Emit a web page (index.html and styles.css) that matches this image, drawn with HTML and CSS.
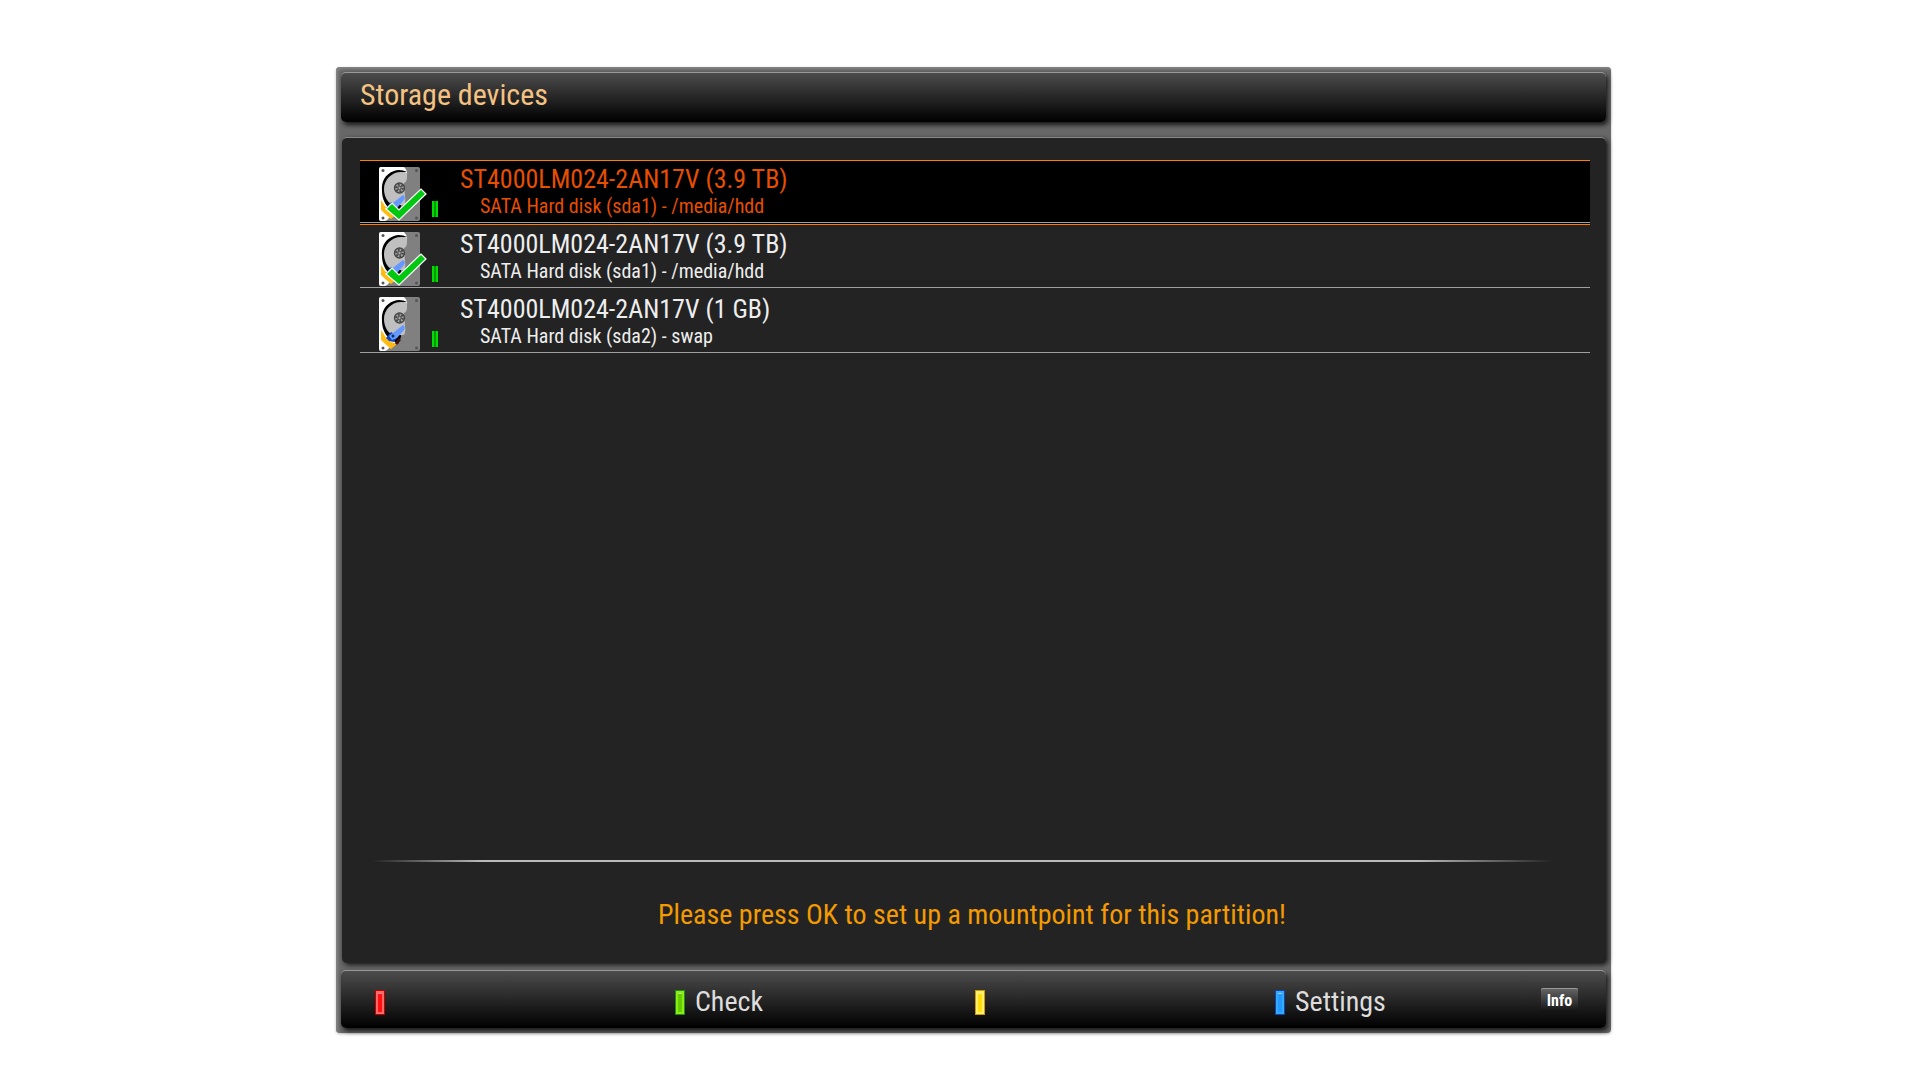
FILE: index.html
```html
<!DOCTYPE html>
<html lang="en">
<head>
<meta charset="utf-8">
<title>Storage devices</title>
<link rel="stylesheet" href="styles.css">
</head>
<body>
<svg class="defs" width="0" height="0" aria-hidden="true">
  <symbol id="disk" viewBox="0 0 50 56">
    <rect x="0" y="0" width="41" height="54" rx="2" fill="#808080"/>
    <path d="M2 0H25Q29 4 28 8L20 42L8 53L6 54H2Q0 54 0 52V2Q0 0 2 0Z" fill="#fff"/>
    <path d="M16 42L25 38L24 45L8 54H38V20L28 6Z" fill="#808080"/>
    <path d="M28 5C24 3 19 2 15 4C6 7 2 15 3 24C3 30 5 36 9 40L19 47L22 40L20 6Z" fill="#000"/>
    <path d="M28 6C16 2 5 11 5 22C5 30 9 36 14 38L25 38Q27 35 26 29L25 16Q28 15 28 10Z" fill="#c0c0c0"/>
    <path d="M2 33L8 42L12 45L18 47L12 52Q6 47 2 43Z" fill="#fb1"/>
    <path d="M16 46L20 41L22 43L18 48Z" fill="#411"/>
    <path d="M7 41L12 35L19 39L15 45L10 44Z" fill="#14b"/>
    <path d="M10 39L24 28Q27 30 25 33L18 41L13 43Z" fill="#69f"/>
    <circle cx="14" cy="39" r="1.5" fill="#036"/>
    <circle cx="20.500" cy="21" r="5" fill="#a0a0a0" stroke="#444" stroke-width="1.3"/>
    <circle cx="20.500" cy="21" r="3.3" fill="none" stroke="#444" stroke-width="2" stroke-dasharray="1.7 1.7"/>
    <circle cx="20.500" cy="21" r="1.7" fill="#aaa" stroke="#444"/>
    <g fill="#555"><circle cx="4" cy="3.500" r="1.500"/><circle cx="37.500" cy="3.500" r="1.500"/><circle cx="4" cy="51" r="1.500"/><circle cx="37.500" cy="51" r="1.500"/></g>
  </symbol>
  <symbol id="tick" viewBox="0 0 50 56">
    <path d="M7 42L13 36L20 43L42 22L47 27L20 53Z" fill="#00c810" stroke="#fff" stroke-width="1.2"/>
  </symbol>
</svg>
<main class="window">
  <header class="bar title-bar"><h1>Storage devices</h1></header>
  <section class="panel">
    <ul class="devices">
      <li class="device selected">
        <svg class="disk" viewBox="0 0 50 56"><use href="#disk"/><use href="#tick"/></svg>
        <span class="plug"></span>
        <div class="info"><p class="name">ST4000LM024-2AN17V (3.9 TB)</p><p class="detail">SATA Hard disk (sda1) - /media/hdd</p></div>
      </li>
      <li class="device">
        <svg class="disk" viewBox="0 0 50 56"><use href="#disk"/><use href="#tick"/></svg>
        <span class="plug"></span>
        <div class="info"><p class="name">ST4000LM024-2AN17V (3.9 TB)</p><p class="detail">SATA Hard disk (sda1) - /media/hdd</p></div>
      </li>
      <li class="device">
        <svg class="disk" viewBox="0 0 50 56"><use href="#disk"/></svg>
        <span class="plug"></span>
        <div class="info"><p class="name">ST4000LM024-2AN17V (1 GB)</p><p class="detail">SATA Hard disk (sda2) - swap</p></div>
      </li>
    </ul>
    <hr class="divider">
    <p class="message">Please press OK to set up a mountpoint for this partition!</p>
  </section>
  <footer class="bar key-bar">
    <button class="key" aria-label="Red"><span class="chip red"></span></button>
    <button class="key"><span class="chip green"></span>Check</button>
    <button class="key" aria-label="Yellow"><span class="chip yellow"></span></button>
    <button class="key"><span class="chip blue"></span>Settings</button>
    <button class="info-key">Info</button>
  </footer>
</main>
</body>
</html>
```
FILE: styles.css
```css
* { box-sizing: border-box; }

body {
  margin: 0;
  min-height: 100vh;
  padding: 67px 309px 47px 336px;
  display: flex;
  background: #fff;
  font-family: "Roboto Condensed", "Liberation Sans Narrow", Roboto, sans-serif;
}

h1, p, ul { margin: 0; padding: 0; font-weight: 400; }

.defs { position: absolute; }

.window {
  flex: 1;
  display: flex;
  flex-direction: column;
  padding: 5px;
  border-radius: 4px;
  background: #686868;
  box-shadow: inset 2px 2px 3px #858585, 0 1px 3px #bbb;
}

.bar {
  border-top: 1px solid #999;
  border-radius: 5px;
  background: linear-gradient(#4c4c4c, #000);
  box-shadow: 2px 3px 5px #000c;
}

.title-bar { padding: 0 19px; margin-bottom: 15px; }

h1 { font-size: 30px; line-height: 44px; padding-bottom: 5px; color: #f4c282; }

.panel {
  flex: 1;
  display: flex;
  flex-direction: column;
  margin: 0 0 7px 1px;
  padding: 22px 16px 28px 18px;
  border-top: 1px solid #888;
  border-radius: 5px;
  background: #232323;
  box-shadow: 2px 2px 5px #000c;
}

.devices { list-style: none; }

.device {
  height: 65px;
  display: flex;
  padding-left: 19px;
  color: #eee;
  background: linear-gradient(#a0a0a0, #a0a0a0) 0 62px / 100% 1px no-repeat;
}

.selected {
  color: #e64e00;
  background-color: #000;
  box-shadow: inset 0 1px #ff7d00, inset 0 -1px #ff7d00;
}

.disk { width: 50px; height: 56px; margin-top: 7px; }

.plug {
  width: 6px;
  height: 16px;
  margin: 41px 22px 0 3px;
  background: linear-gradient(90deg, #0d0 2px, #090 2px 4px, #0d0 4px);
}

.name { font-size: 26px; line-height: 32px; padding-top: 3px; }
.detail { font-size: 20px; line-height: 22px; padding-left: 20px; }

.divider {
  width: 100%;
  height: 2px;
  margin: auto 0 0;
  border: 0;
  background: linear-gradient(90deg, #2320 1%, #bbb 10%, #bbb 86%, #2320 97%);
}

.message {
  padding: 33px 6px 0 0;
  font-size: 28px;
  line-height: 40px;
  text-align: center;
  color: #f39b00;
}

.key-bar {
  height: 58px;
  display: flex;
  padding: 5px 28px 0 34px;
  align-items: center;
}

button { border: 0; padding: 0; background: none; font: inherit; color: #ddd; }

.key {
  flex: 0 0 300px;
  display: flex;
  align-items: center;
  gap: 10px;
  font-size: 28px;
  line-height: 32px;
}

.key:nth-child(4) { flex: 0 1 auto; }

.chip { width: 10px; height: 25px; border: 1px solid; box-shadow: inset 0 0 0 2px var(--rim), inset 0 3px #fff8; }
.red { --rim: #f66; border-color: #b00; background: #f11; }
.green { --rim: #8e1; border-color: #282; background: #6c0; }
.yellow { --rim: #fe6; border-color: #c90; background: #fd1; }
.blue { --rim: #3af; border-color: #14a; background: #29f; }

.info-key {
  width: 37px;
  height: 24px;
  margin: 0 0 4px auto;
  border-radius: 2px;
  background: linear-gradient(#666, #111);
  box-shadow: inset 0 1px #999;
  color: #fff;
  font-size: 16px;
  font-weight: 700;
}
```
